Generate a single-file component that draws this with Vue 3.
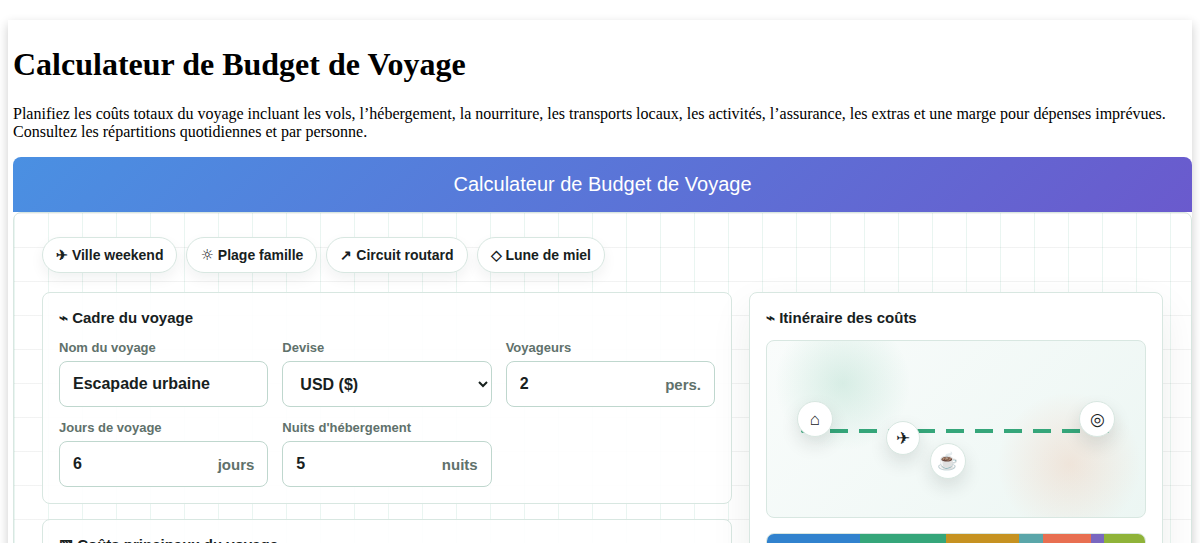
<script setup>
import { ref } from 'vue'

const presets = [
  { icon: '✈', label: 'Ville weekend' },
  { icon: '☼', label: 'Plage famille', symbol: true },
  { icon: '↗', label: 'Circuit routard' },
  { icon: '◇', label: 'Lune de miel' },
]

const tripName = ref('Escapade urbaine')
const currency = ref('USD')
const travellers = ref('2')
const days = ref('6')
const nights = ref('5')

const shares = [
  { name: 'vols', value: 93 },
  { name: 'hotel', value: 86 },
  { name: 'food', value: 73 },
  { name: 'local', value: 24 },
  { name: 'fun', value: 48 },
  { name: 'cover', value: 13 },
  { name: 'margin', value: 41 },
]
</script>

<template>
  <main class="page">
    <h1>Calculateur de Budget de Voyage</h1>
    <p class="intro">
      Planifiez les coûts totaux du voyage incluant les vols, l’hébergement, la nourriture, les transports locaux, les activités, l’assurance, les extras et une marge pour dépenses imprévues. Consultez les répartitions quotidiennes et par personne.
    </p>
    <div class="banner">Calculateur de Budget de Voyage</div>
    <div class="calculator">
      <div class="presets">
        <button v-for="p in presets" :key="p.label" type="button" class="preset"><span :class="{ symbol: p.symbol }">{{ p.icon }}</span> {{ p.label }}</button>
      </div>
      <div class="columns">
        <div class="stack">
          <section class="card">
            <h2>⌁ Cadre du voyage</h2>
            <div class="fields">
              <div class="field">
                <label for="trip-name">Nom du voyage</label>
                <div class="control"><input id="trip-name" v-model="tripName" type="text"></div>
              </div>
              <div class="field">
                <label for="currency">Devise</label>
                <div class="control">
                  <select id="currency" v-model="currency">
                    <option value="USD">USD ($)</option>
                    <option value="EUR">EUR (€)</option>
                  </select>
                </div>
              </div>
              <div class="field">
                <label for="travellers">Voyageurs</label>
                <div class="control"><input id="travellers" v-model="travellers" type="text" inputmode="numeric"><span class="unit">pers.</span></div>
              </div>
              <div class="field">
                <label for="days">Jours de voyage</label>
                <div class="control"><input id="days" v-model="days" type="text" inputmode="numeric"><span class="unit">jours</span></div>
              </div>
              <div class="field">
                <label for="nights">Nuits d'hébergement</label>
                <div class="control"><input id="nights" v-model="nights" type="text" inputmode="numeric"><span class="unit">nuits</span></div>
              </div>
            </div>
          </section>
          <section class="card">
            <h2>▧ Coûts principaux du voyage</h2>
          </section>
        </div>
        <section class="card summary">
          <h2>⌁ Itinéraire des coûts</h2>
          <div class="map">
            <div class="route"></div>
            <span class="stop home">⌂</span>
            <span class="stop flight">✈</span>
            <span class="stop cafe">☕</span>
            <span class="stop goal">◎</span>
          </div>
          <div class="shares">
            <span v-for="s in shares" :key="s.name" :class="s.name" :style="{ flexGrow: s.value }"></span>
          </div>
        </section>
      </div>
    </div>
  </main>
</template>

<style>
body {
  margin: 0;
  background: #fff;
}
</style>

<style scoped>
.page {
  margin: 20px 8px;
  padding: 5px 0 5px 5px;
  background: #fff;
  box-shadow: 0 4px 10px rgba(0, 0, 0, 0.2);
  font-family: "Liberation Serif", "Times New Roman", serif;
  color: #000;
}
h1 {
  margin: 21px 0 22px;
  font-size: 32px;
  line-height: 37px;
}
.intro {
  margin: 0 0 16px;
  font-size: 16px;
  line-height: 18px;
}
.banner {
  padding: 16px;
  border-radius: 8px 8px 0 0;
  background: linear-gradient(135deg, #4a90e2, #6a5acd);
  color: #fff;
  font: 20px/23px "Liberation Sans", Arial, sans-serif;
  text-align: center;
}
.calculator {
  padding: 24px 28px;
  border: 1px solid #d8e7e1;
  border-radius: 8px;
  background:
    linear-gradient(90deg, rgba(47, 158, 121, 0.1) 1px, transparent 1px) 0 0 / 34px 34px,
    linear-gradient(rgba(32, 40, 38, 0.06) 1px, transparent 1px) 0 0 / 34px 34px,
    #fff;
  color: #17211e;
  font-family: "Liberation Sans", Arial, sans-serif;
}
.presets {
  display: flex;
  flex-wrap: wrap;
  gap: 9px;
  margin-bottom: 19px;
}
.preset {
  height: 36px;
  padding: 0 13px;
  border: 1px solid #d8e7e1;
  border-radius: 18px;
  background: #fff;
  box-shadow: 0 6px 14px rgba(23, 33, 30, 0.06);
  color: inherit;
  font: bold 14px/16px "Liberation Sans", Arial, sans-serif;
}
.symbol {
  font-family: "DejaVu Sans", sans-serif;
  font-size: 15px;
  font-weight: normal;
}
.columns {
  display: grid;
  grid-template-columns: 5fr 3fr;
  gap: 17px;
  align-items: start;
}
.stack {
  display: grid;
  gap: 15px;
}
.card {
  padding: 16px;
  border: 1px solid #d8e7e1;
  border-radius: 8px;
  background: rgba(255, 255, 255, 0.9);
}
.summary {
  background: #fff;
  box-shadow: 0 18px 42px rgba(23, 33, 30, 0.08);
}
h2 {
  margin: 0 0 14px;
  font-size: 15px;
  line-height: 17px;
}
.fields {
  display: grid;
  grid-template-columns: repeat(3, 1fr);
  gap: 13px 14px;
}
.field {
  display: grid;
  gap: 6px;
}
label {
  color: #60716b;
  font-size: 13px;
  font-weight: bold;
  line-height: 15px;
}
.control {
  display: flex;
  align-items: center;
  height: 44px;
  border: 1px solid #bfd7ce;
  border-radius: 8px;
  background: #fff;
  overflow: hidden;
}
input,
select {
  flex: 1;
  min-width: 0;
  height: 44px;
  padding: 0 13px;
  border: 0;
  outline: 0;
  background: transparent;
  color: #17211e;
  font: bold 16px/18px "Liberation Sans", Arial, sans-serif;
}
select {
  padding-right: 0;
}
.unit {
  padding-right: 13px;
  color: #60716b;
  font-size: 15px;
  font-weight: bold;
}
.map {
  position: relative;
  height: 176px;
  border: 1px solid #d8e7e1;
  border-radius: 8px;
  overflow: hidden;
  background:
    radial-gradient(circle at 20% 24%, rgba(53, 166, 122, 0.16), transparent 68px),
    radial-gradient(circle at 80% 70%, rgba(240, 130, 80, 0.16), transparent 72px),
    linear-gradient(135deg, #f9fcfb, #ecf6f3);
}
.route {
  position: absolute;
  left: 9%;
  right: 9%;
  top: 50%;
  height: 4px;
  border-radius: 4px;
  background: repeating-linear-gradient(90deg, #35a67a 0 18px, transparent 18px 29px);
}
.stop {
  position: absolute;
  display: grid;
  place-items: center;
  box-sizing: border-box;
  width: 36px;
  height: 36px;
  padding-top: 2px;
  border: 1px solid #d8e7e1;
  border-radius: 50%;
  background: #fff;
  box-shadow: 0 8px 18px rgba(23, 33, 30, 0.12);
  font-size: 17px;
  line-height: 20px;
}
.home {
  left: 30px;
  top: 34%;
}
.flight {
  left: 119px;
  top: 80px;
  width: 34px;
  height: 34px;
}
.cafe {
  left: 43%;
  top: 58%;
}
.goal {
  right: 30px;
  top: 34%;
}
.shares {
  display: flex;
  height: 18px;
  margin-top: 15px;
  border: 1px solid #d8e7e1;
  border-radius: 8px;
  overflow: hidden;
}
.shares span {
  flex-basis: 0;
}
.vols {
  background: #3182ce;
}
.hotel {
  background: #35a67a;
}
.food {
  background: #c69221;
}
.local {
  background: #5aa6a9;
}
.fun {
  background: #e86f51;
}
.cover {
  background: #7967c0;
}
.margin {
  background: #8fb339;
}
</style>
